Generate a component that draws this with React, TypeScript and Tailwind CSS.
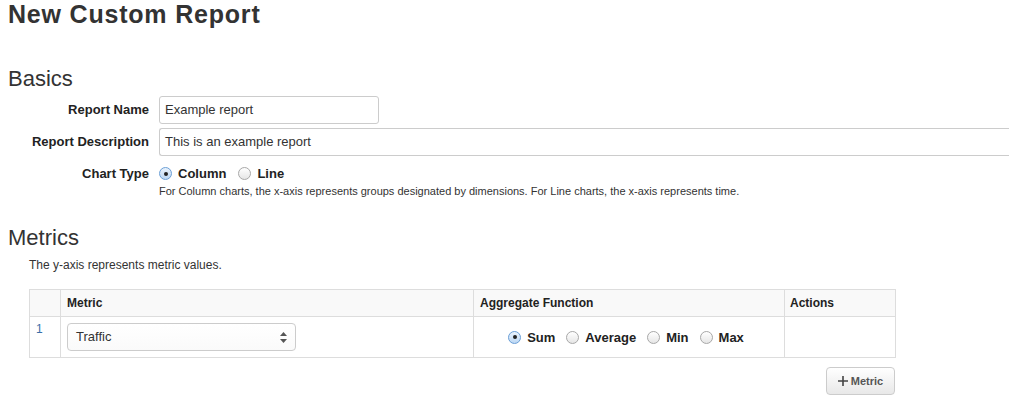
import React from 'react';

const Radio: React.FC<{ checked?: boolean; label: string }> = ({ checked, label }) => (
  <label className="flex items-center gap-[6px]">
    <span
      className={
        checked
          ? 'flex h-[13px] w-[13px] items-center justify-center rounded-full border border-[#6b9fd6] bg-gradient-to-b from-[#eaf3fc] to-[#bcd7f4]'
          : 'flex h-[13px] w-[13px] items-center justify-center rounded-full border border-[#a8a8a8] bg-gradient-to-b from-[#ffffff] to-[#e6e6e6]'
      }
    >
      {checked && <span className="h-[4px] w-[4px] rounded-full bg-[#222]" />}
    </span>
    <span className="text-[13px] leading-[15px] font-semibold text-[#222]">{label}</span>
  </label>
);

const App: React.FC = () => {
  return (
    <div className="h-[409px] w-[1009px] overflow-hidden bg-white font-['Liberation_Sans',Arial,sans-serif] text-[#333]">
      <h1 className="pl-[8px] text-[25px] font-bold leading-[28px] tracking-[0.8px] text-[#333]">New Custom Report</h1>

      <h2 className="mt-[37px] pl-[8px] text-[22px] font-light leading-[28px] text-[#333]">Basics</h2>

      <div className="mt-[3px] flex items-center">
        <div className="w-[149px] text-right text-[13px] font-semibold text-[#222]">Report Name</div>
        <div className="ml-[10px] flex h-[28px] w-[220px] items-center rounded-[3px] border border-[#ccc] px-[5px] text-[13px] text-[#333]">
          Example report
        </div>
      </div>

      <div className="mt-[4px] flex items-center">
        <div className="w-[149px] text-right text-[13px] font-semibold text-[#222]">Report Description</div>
        <div className="ml-[10px] flex h-[28px] flex-1 items-center rounded-l-[3px] border-y border-l border-[#ccc] px-[5px] text-[13px] text-[#333]">
          This is an example report
        </div>
      </div>

      <div className="mt-[10px] flex items-start">
        <div className="w-[149px] text-right text-[13px] leading-[15px] font-semibold text-[#222]">Chart Type</div>
        <div className="ml-[10px]">
          <div className="flex items-center gap-[12px]">
            <Radio checked label="Column" />
            <Radio label="Line" />
          </div>
          <p className="mt-[3px] text-[11px] leading-[14px] text-[#333]">
            For Column charts, the x-axis represents groups designated by dimensions. For Line charts, the x-axis represents time.
          </p>
        </div>
      </div>

      <h2 className="mt-[26px] pl-[8px] text-[22px] font-light leading-[28px] text-[#333]">Metrics</h2>
      <p className="mt-[5px] pl-[29px] text-[12px] leading-[16px] text-[#333]">The y-axis represents metric values.</p>

      <table className="ml-[29px] mt-[16px] w-[867px] border-collapse text-[12px]">
        <thead>
          <tr className="h-[27px] bg-[#f9f9f9] text-left">
            <th className="w-[31px] border border-[#ddd]" />
            <th className="w-[413px] border border-[#ddd] px-[6px] font-semibold text-[#222]">Metric</th>
            <th className="w-[311px] border border-[#ddd] px-[6px] font-semibold text-[#222]">Aggregate Function</th>
            <th className="border border-[#ddd] px-[5px] font-semibold text-[#222]">Actions</th>
          </tr>
        </thead>
        <tbody>
          <tr className="h-[41px]">
            <td className="border border-[#ddd] px-[6px] pb-[16px] align-middle text-[#3a6fa8]">1</td>
            <td className="border border-[#ddd] px-[6px]">
              <div className="flex h-[28px] w-[229px] items-center justify-between rounded-[4px] border border-[#ccc] bg-gradient-to-b from-[#fff] to-[#fafafa] px-[8px] text-[13px] text-[#333]">
                <span>Traffic</span>
                <svg width="7" height="11" viewBox="0 0 7 11">
                  <path d="M3.5 0 L7 4 L0 4 Z" fill="#555" />
                  <path d="M3.5 11 L7 7 L0 7 Z" fill="#555" />
                </svg>
              </div>
            </td>
            <td className="border border-[#ddd]">
              <div className="flex items-center justify-center gap-[11px] pr-[6px]">
                <Radio checked label="Sum" />
                <Radio label="Average" />
                <Radio label="Min" />
                <Radio label="Max" />
              </div>
            </td>
            <td className="border border-[#ddd]" />
          </tr>
        </tbody>
      </table>

      <div className="ml-[826px] mt-[9px] flex h-[28px] w-[69px] items-center justify-center gap-[3px] rounded-[4px] border border-[#ccc] bg-gradient-to-b from-[#fff] to-[#e8e8e8] text-[11px] font-bold text-[#555]">
        <svg width="10" height="10" viewBox="0 0 10 10">
          <path d="M5 0 V10 M0 5 H10" stroke="#444" strokeWidth="1.6" />
        </svg>
        <span>Metric</span>
      </div>
    </div>
  );
};

export default App;
